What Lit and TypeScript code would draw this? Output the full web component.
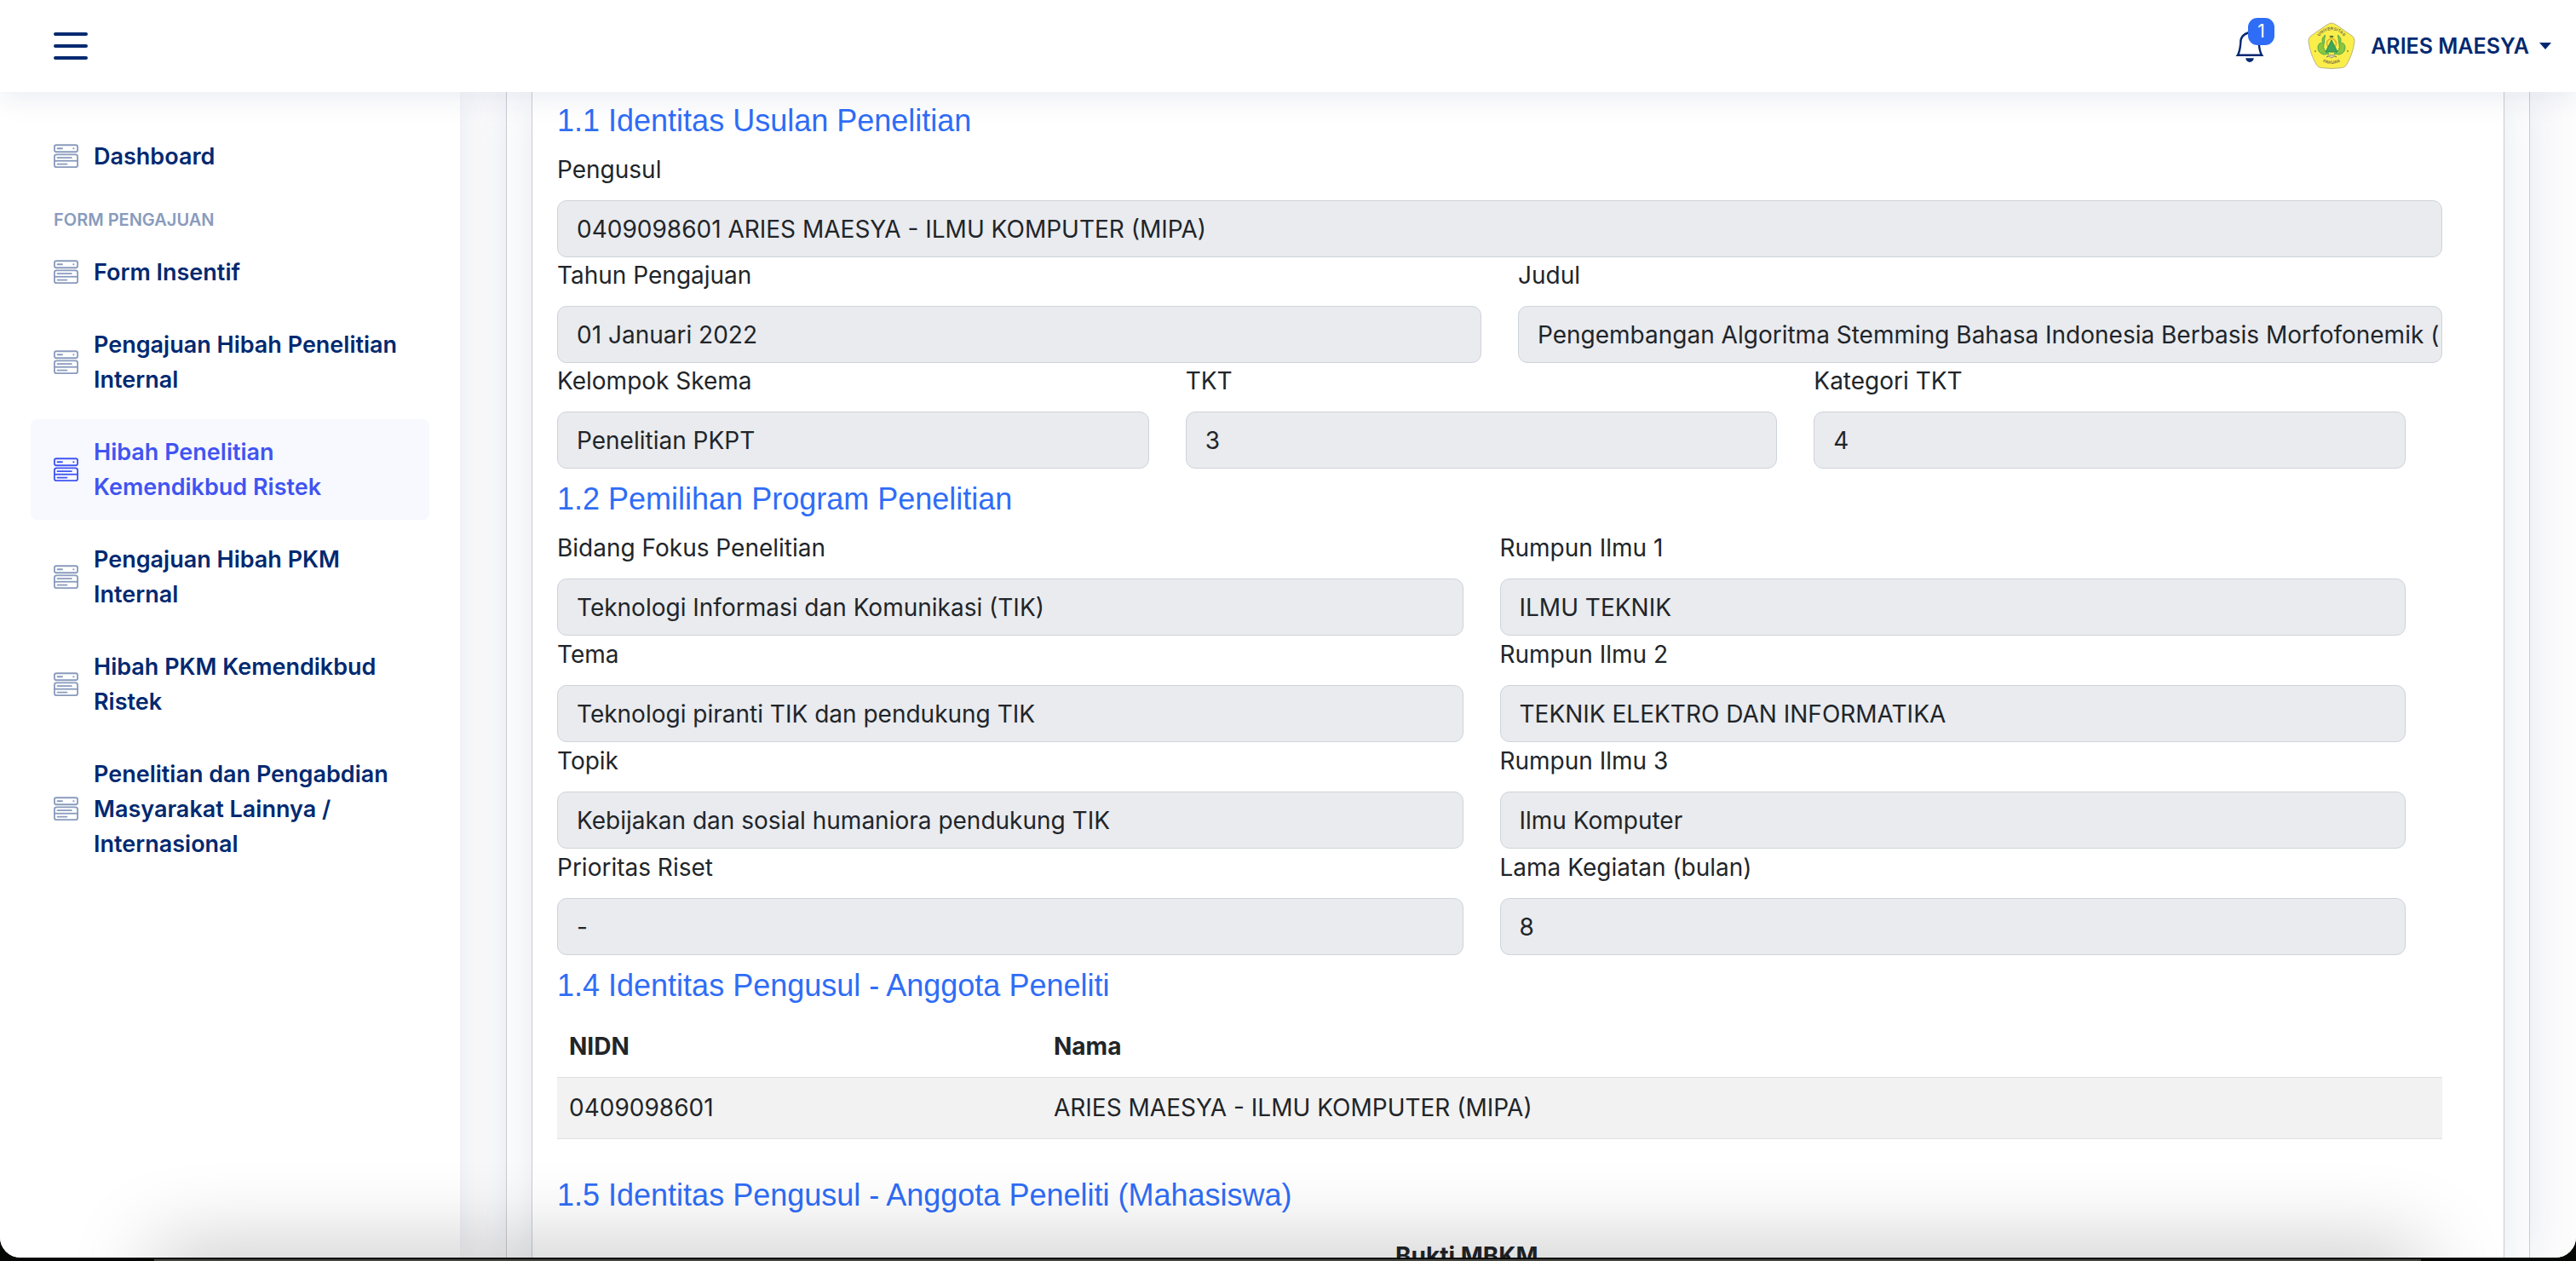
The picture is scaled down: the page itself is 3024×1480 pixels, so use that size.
import { LitElement, html, css, svg } from "lit";
import { customElement } from "lit/decorators.js";

interface NavItem {
  label: string;
  active?: boolean;
}

interface Field {
  id: string;
  label: string;
  value: string;
}

const FIRST_NAV: NavItem[] = [{ label: "Dashboard" }];

const FORM_NAV: NavItem[] = [
  { label: "Form Insentif" },
  { label: "Pengajuan Hibah Penelitian Internal" },
  { label: "Hibah Penelitian Kemendikbud Ristek", active: true },
  { label: "Pengajuan Hibah PKM Internal" },
  { label: "Hibah PKM Kemendikbud Ristek" },
  { label: "Penelitian dan Pengabdian Masyarakat Lainnya / Internasional" },
];

const PENGUSUL: Field[] = [
  { id: "pengusul", label: "Pengusul", value: "0409098601 ARIES MAESYA - ILMU KOMPUTER (MIPA)" },
];

const JUDUL: Field[] = [
  { id: "tahun", label: "Tahun Pengajuan", value: "01 Januari 2022" },
  { id: "judul", label: "Judul", value: "Pengembangan Algoritma Stemming Bahasa Indonesia Berbasis Morfofonemik (" },
];

const SKEMA: Field[] = [
  { id: "skema", label: "Kelompok Skema", value: "Penelitian PKPT" },
  { id: "tkt", label: "TKT", value: "3" },
  { id: "kategori", label: "Kategori TKT", value: "4" },
];

const PROGRAM: Field[] = [
  { id: "bidang", label: "Bidang Fokus Penelitian", value: "Teknologi Informasi dan Komunikasi (TIK)" },
  { id: "rumpun1", label: "Rumpun Ilmu 1", value: "ILMU TEKNIK" },
  { id: "tema", label: "Tema", value: "Teknologi piranti TIK dan pendukung TIK" },
  { id: "rumpun2", label: "Rumpun Ilmu 2", value: "TEKNIK ELEKTRO DAN INFORMATIKA" },
  { id: "topik", label: "Topik", value: "Kebijakan dan sosial humaniora pendukung TIK" },
  { id: "rumpun3", label: "Rumpun Ilmu 3", value: "Ilmu Komputer" },
  { id: "prioritas", label: "Prioritas Riset", value: "-" },
  { id: "lama", label: "Lama Kegiatan (bulan)", value: "8" },
];

const serverIcon = svg`
  <svg class="nav-icon" viewBox="0 0 16 16" aria-hidden="true">
    <g fill="none" stroke="currentColor" stroke-width="1">
      <rect x=".5" y=".7" width="15" height="4.4" rx="1.2"/>
      <rect x=".5" y="6.8" width="15" height="8.2" rx="1.4"/>
      <path d="M.5 10.9h15"/>
      <path stroke-linecap="round" d="M2.5 2.9h3M2.5 8.9h9M2.5 13h6M12.8 2.9h.2"/>
    </g>
  </svg>`;

const universityLogo = svg`
  <svg class="logo" viewBox="0 0 56 56" aria-hidden="true">
    <path d="M28 1Q30 1 34 3.500L52 16Q55.500 18.500 55 22.500Q53 38 45.500 50Q44 53 40.500 53.500Q28 55.500 15.500 53.500Q12 53 10.500 50Q3 38 1 22.500Q.5 18.500 4 16L22 3.500Q26 1 28 1Z" fill="#fbee4a" stroke="#b9b483" stroke-width="1"/>
    <defs>
      <path id="arc-top" d="M11 31A17.500 17.500 0 1 1 45 31"/>
      <path id="arc-bottom" d="M10.500 40A21.500 21.500 0 0 0 45.500 40"/>
    </defs>
    <g font-family="Liberation Sans, sans-serif" font-size="5" font-weight="700" fill="#77734a" text-anchor="middle">
      <text><textPath href="#arc-top" startOffset="50%">UNIVERSITAS</textPath></text>
      <text><textPath href="#arc-bottom" startOffset="50%">PAKUAN</textPath></text>
    </g>
    <circle cx="9" cy="34" r="1" fill="#8a854a"/>
    <circle cx="47" cy="34" r="1" fill="#8a854a"/>
    <g fill="#8cc63f" stroke="#4fa84f" stroke-width="1">
      <path d="M20.500 15Q15 20 18 24Q12 24 12 30Q12 36 19 38L25 37Q17 33 19 26Z"/>
      <path d="M35.500 15Q41 20 38 24Q44 24 44 30Q44 36 37 38L31 37Q39 33 37 26Z"/>
    </g>
    <circle cx="28" cy="25" r="5.500" fill="none" stroke="#dcae30" stroke-width="1.500"/>
    <path d="M28 21L35 35H21Z" fill="#3fa65a" stroke="#2f8f49" stroke-width="1"/>
    <ellipse cx="28" cy="17" rx="2.500" ry="1.200" fill="#5d7a2c"/>
    <path d="M22 41Q25 37 28 39Q31 37 34 41L31 40L28 42L25 40Z" fill="#e4e0c8" stroke="#77734a" stroke-width=".7"/>
  </svg>`;

@customElement("app-root")
export class AppRoot extends LitElement {
  static styles = css`
    :host {
      display: block;
      height: 100vh;
      overflow: hidden;
      background: linear-gradient(#46453f, #46453f) no-repeat center bottom / 88% 2px #050805;
      color: #212529;
      font-family: Inter, "Liberation Sans", sans-serif;
      font-size: 28px;
      line-height: 43px;
    }
    * { box-sizing: border-box; }
    .window {
      position: relative;
      display: flex;
      flex-direction: column;
      height: calc(100vh - 4px);
      overflow: hidden;
      background: #fff;
      border-radius: 0 0 24px 24px;
    }
    .header {
      position: relative;
      z-index: 2;
      flex: none;
      display: flex;
      align-items: center;
      justify-content: space-between;
      height: 108px;
      padding: 0 29px 0 54px;
      background: #fff;
      box-shadow: 0 4px 36px rgba(1, 41, 112, 0.1);
    }
    .icon-button {
      display: flex;
      padding: 0;
      border: 0;
      background: none;
      color: #012970;
      font: inherit;
      cursor: pointer;
    }
    .menu-icon { width: 58px; height: 58px; }
    .account { display: flex; align-items: center; }
    .bell { position: relative; margin-right: 49px; }
    .bell-icon { width: 38px; height: 38px; }
    .badge {
      position: absolute;
      left: 17px;
      top: -14px;
      width: 31px;
      height: 32px;
      border-radius: 11px;
      background: #2f6df6;
      color: #fff;
      font-size: 21px;
      line-height: 31px;
      text-align: center;
    }
    .profile { align-items: center; }
    .logo { width: 56px; height: 56px; margin-right: 18px; }
    .user { font-size: 25px; font-weight: 600; }
    .caret { width: 14px; height: 8px; margin-left: 12px; }
    .body { flex: 1; min-height: 0; display: flex; }
    .sidebar {
      position: relative;
      z-index: 1;
      flex: none;
      width: 540px;
      padding: 37px 36px;
      overflow: hidden;
      background: #fff;
      box-shadow: 0 0 36px rgba(1, 41, 112, 0.1);
    }
    .nav { display: flex; flex-direction: column; gap: 8px; margin: 0; padding: 0; list-style: none; }
    .nav-link {
      display: flex;
      align-items: center;
      gap: 18px;
      padding: 18px 27px;
      border-radius: 7px;
      color: #012970;
      font-size: 27px;
      font-weight: 600;
      line-height: 41px;
      text-decoration: none;
    }
    .nav-link .nav-icon { color: #899bbd; }
    .nav-link.active, .nav-link.active .nav-icon { color: #4154f1; }
    .nav-link.active { background: #f7f9ff; }
    .nav-icon { flex: none; width: 29px; height: 37px; }
    .nav-heading {
      padding: 13px 27px 0;
      color: #899bbd;
      font-size: 20px;
      font-weight: 600;
      line-height: 30px;
    }
    .main {
      flex: 1;
      min-width: 0;
      padding: 0 54px;
      background: #fdfdfe;
      overflow: hidden;
    }
    .card {
      border: 1px solid #cbccd1;
      border-width: 0 1px;
      background: #fff;
      box-shadow: 0 0 54px rgba(1, 41, 112, 0.1);
    }
    .outer { height: 100%; padding: 0 29px; overflow: hidden; }
    .inner { min-height: 100%; padding: 12px 72px 0 29px; }
    .title {
      margin: 0;
      padding-bottom: 15px;
      color: #2f6df6;
      font-family: "Liberation Sans", Arial, sans-serif;
      font-size: 36px;
      font-weight: 400;
      line-height: 43px;
    }
    .row { display: grid; gap: 1px 43px; }
    .cols-1 { grid-template-columns: 1fr; }
    .cols-2 { grid-template-columns: repeat(2, minmax(0, 1fr)); }
    .cols-3 { grid-template-columns: repeat(3, minmax(0, 1fr)); }
    .inset { margin-right: 43px; padding-bottom: 14px; }
    .label { display: block; padding-bottom: 14px; }
    .control {
      display: block;
      width: 100%;
      height: 67px;
      padding: 0 2px 0 22px;
      border: 1px solid #ced4da;
      border-radius: 11px;
      background: #e9ebef;
      color: #212529;
      font: inherit;
    }
    .table { width: 100%; margin-bottom: 44px; border-collapse: collapse; table-layout: fixed; }
    .table th, .table td { padding: 14px; text-align: left; border-bottom: 1px solid #dee0e2; }
    .table th { font-weight: 700; }
    .table td { background: #f2f2f2; }
    .nidn { width: 569px; }
    .students th { border: 0; }
    .before-proof { width: 970px; }
    .dock-shade {
      position: absolute;
      left: 190px;
      right: 190px;
      bottom: -60px;
      height: 60px;
      z-index: 3;
      box-shadow: 0 0 100px 10px rgba(0, 0, 0, 0.24);
      pointer-events: none;
    }
  `;

  private navItem(item: NavItem) {
    return html`<li>
      <a class="nav-link ${item.active ? "active" : ""}" href="#">${serverIcon}<span>${item.label}</span></a>
    </li>`;
  }

  private fields(list: Field[], layout: string) {
    return html`<div class="row ${layout}">
      ${list.map(
        (f) => html`<div>
          <label class="label" for=${f.id}>${f.label}</label>
          <input class="control" id=${f.id} type="text" readonly .value=${f.value} />
        </div>`
      )}
    </div>`;
  }

  render() {
    return html`
      <div class="window">
        <header class="header">
          <button class="icon-button" aria-label="Menu">
            <svg class="menu-icon" viewBox="0 0 58 58" fill="none" stroke="currentColor" stroke-width="4" stroke-linecap="round">
              <path d="M11 15h36M11 29h36M11 43h36" />
            </svg>
          </button>
          <div class="account">
            <button class="icon-button bell" aria-label="Notifikasi">
              <svg class="bell-icon" viewBox="0 0 16 16" fill="currentColor">
                <path d="M8 16a2 2 0 0 0 2-2H6a2 2 0 0 0 2 2zM8 1.918l-.797.161A4.002 4.002 0 0 0 4 6c0 .628-.134 2.197-.459 3.742-.16.767-.376 1.566-.663 2.258h10.244c-.287-.692-.502-1.49-.663-2.258C12.134 8.197 12 6.628 12 6a4.002 4.002 0 0 0-3.203-3.92L8 1.917zM14.22 12c.223.447.481.801.78 1H1c.299-.199.557-.553.78-1C2.68 10.2 3 6.88 3 6c0-2.42 1.72-4.44 4.005-4.901a1 1 0 1 1 1.99 0A5.002 5.002 0 0 1 13 6c0 .88.32 4.2 1.22 6z" />
              </svg>
              <span class="badge">1</span>
            </button>
            <button class="icon-button profile">
              ${universityLogo}
              <span class="user">ARIES MAESYA</span>
              <svg class="caret" viewBox="0 0 14 8" fill="currentColor"><path d="M0 0h14L7 8z" /></svg>
            </button>
          </div>
        </header>
        <div class="body">
          <nav class="sidebar">
            <ul class="nav">
              ${FIRST_NAV.map((i) => this.navItem(i))}
              <li class="nav-heading">FORM PENGAJUAN</li>
              ${FORM_NAV.map((i) => this.navItem(i))}
            </ul>
          </nav>
          <main class="main">
            <div class="card outer">
              <div class="card inner">
                <h5 class="title">1.1 Identitas Usulan Penelitian</h5>
                ${this.fields(PENGUSUL, "cols-1")}
                ${this.fields(JUDUL, "cols-2")}
                ${this.fields(SKEMA, "cols-3 inset")}
                <h5 class="title">1.2 Pemilihan Program Penelitian</h5>
                ${this.fields(PROGRAM, "cols-2 inset")}
                <h5 class="title">1.4 Identitas Pengusul - Anggota Peneliti</h5>
                <table class="table">
                  <thead><tr><th class="nidn">NIDN</th><th>Nama</th></tr></thead>
                  <tbody><tr><td>0409098601</td><td>ARIES MAESYA - ILMU KOMPUTER (MIPA)</td></tr></tbody>
                </table>
                <h5 class="title">1.5 Identitas Pengusul - Anggota Peneliti (Mahasiswa)</h5>
                <table class="table students">
                  <thead><tr><th class="before-proof"></th><th>Bukti MBKM</th></tr></thead>
                </table>
              </div>
            </div>
          </main>
        </div>
        <div class="dock-shade"></div>
      </div>
    `;
  }
}
